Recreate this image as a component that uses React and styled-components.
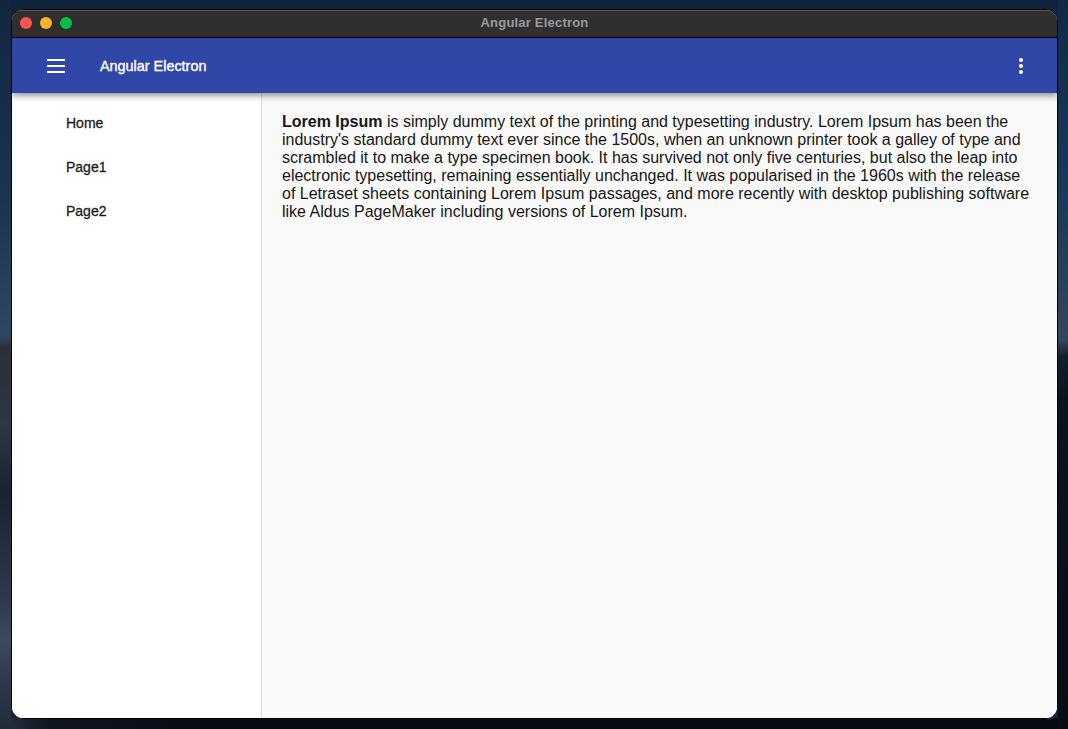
import React from 'react';
import styled, { createGlobalStyle } from 'styled-components';

const GlobalStyle = createGlobalStyle`
  html, body {
    margin: 0;
    padding: 0;
    height: 100%;
    overflow: hidden;
  }
  * {
    box-sizing: border-box;
  }
`;

const Desktop = styled.div`
  width: 1068px;
  height: 729px;
  padding: 9px 10px 10px 11px;
  font-family: "Liberation Sans", Arial, sans-serif;
  background:
    linear-gradient(180deg, #13263f 0, #1b3450 200px, #2e4860 335px, #2b3038 348px, #2f3644 425px, #1b2230 490px, #2e3a4a 600px, #3d4a5a 640px, #2f3a4a 680px, #222b3a 729px) left top / 11px 100% no-repeat,
    linear-gradient(180deg, #0f2a48 0, #1a3a5a 200px, #33475c 340px, #10202e 356px, #0a141f 400px, #090d16 729px) right top / 10px 100% no-repeat,
    linear-gradient(90deg, #2a3340 0, #101622 48px, #070c14 200px, #070c14 100%) left bottom / 100% 11px no-repeat,
    #10233c;
`;

const Window = styled.div`
  width: 1047px;
  height: 710px;
  display: flex;
  flex-direction: column;
  border: 1px solid #000;
  border-radius: 12px;
  overflow: hidden;
  background: #fff;
`;

const TitleBar = styled.div`
  position: relative;
  flex: 0 0 28px;
  display: flex;
  align-items: center;
  justify-content: center;
  padding-bottom: 3px;
  background: #2f2f2f;
  border-top: 1px solid #5a5a5a;
  border-bottom: 1px solid #000;
`;

const Lights = styled.div`
  position: absolute;
  left: 8px;
  top: 6px;
  display: flex;
  gap: 8px;
`;

const Light = styled.span`
  width: 12px;
  height: 12px;
  border-radius: 50%;
  background: ${(p) => p.$color};
`;

const WindowTitle = styled.span`
  font-size: 13px;
  font-weight: 700;
  letter-spacing: 0.2px;
  color: #9a9a9a;
`;

const Toolbar = styled.header`
  position: relative;
  z-index: 2;
  flex: 0 0 55px;
  display: flex;
  align-items: center;
  padding: 0 33px 0 35px;
  background: #3047a8;
  box-shadow: 0 3px 6px rgba(0, 0, 0, 0.4);
`;

const AppTitle = styled.span`
  margin-left: 35px;
  font-size: 14.4px;
  color: #fff;
  -webkit-text-stroke: 0.35px #fff;
`;

const MenuIcon = styled.svg`
  display: block;
  width: 18px;
  height: 14px;
`;

const MoreIcon = styled.svg`
  display: block;
  width: 6px;
  height: 18px;
  margin-left: auto;
`;

const Body = styled.div`
  flex: 1;
  display: flex;
  min-height: 0;
`;

const Sidebar = styled.nav`
  flex: 0 0 250px;
  display: flex;
  flex-direction: column;
  padding: 8px 0 0 54px;
  background: #fff;
  border-right: 1px solid #dcdcdc;
`;

const NavItem = styled.a`
  height: 44px;
  display: flex;
  align-items: center;
  padding-bottom: 1px;
  font-size: 14px;
  color: #1c1c1c;
  -webkit-text-stroke: 0.3px #1c1c1c;
`;

const Content = styled.main`
  flex: 1;
  padding: 20px 20px;
  background: #f9f9f9;
`;

const Paragraph = styled.p`
  margin: 0;
  font-size: 16px;
  line-height: 18px;
  color: #161616;
`;

export default function App() {
  return (
    <>
      <GlobalStyle />
      <Desktop>
        <Window>
          <TitleBar>
            <Lights>
              <Light $color="#fd5350" />
              <Light $color="#feb32f" />
              <Light $color="#05bf46" />
            </Lights>
            <WindowTitle>Angular Electron</WindowTitle>
          </TitleBar>
          <Toolbar>
            <MenuIcon viewBox="0 0 18 14">
              <rect x="0" y="0" width="18" height="2" fill="#fff" />
              <rect x="0" y="6" width="18" height="2" fill="#fff" />
              <rect x="0" y="12" width="18" height="2" fill="#fff" />
            </MenuIcon>
            <AppTitle>Angular Electron</AppTitle>
            <MoreIcon viewBox="0 0 6 18">
              <circle cx="3" cy="3" r="2" fill="#fff" />
              <circle cx="3" cy="9" r="2" fill="#fff" />
              <circle cx="3" cy="15" r="2" fill="#fff" />
            </MoreIcon>
          </Toolbar>
          <Body>
            <Sidebar>
              <NavItem>Home</NavItem>
              <NavItem>Page1</NavItem>
              <NavItem>Page2</NavItem>
            </Sidebar>
            <Content>
              <Paragraph>
                <strong>Lorem Ipsum</strong> is simply dummy text of the printing and typesetting industry. Lorem Ipsum has been the industry's standard dummy text ever since the 1500s, when an unknown printer took a galley of type and scrambled it to make a type specimen book. It has survived not only five centuries, but also the leap into electronic typesetting, remaining essentially unchanged. It was popularised in the 1960s with the release of Letraset sheets containing Lorem Ipsum passages, and more recently with desktop publishing software like Aldus PageMaker including versions of Lorem Ipsum.
              </Paragraph>
            </Content>
          </Body>
        </Window>
      </Desktop>
    </>
  );
}
